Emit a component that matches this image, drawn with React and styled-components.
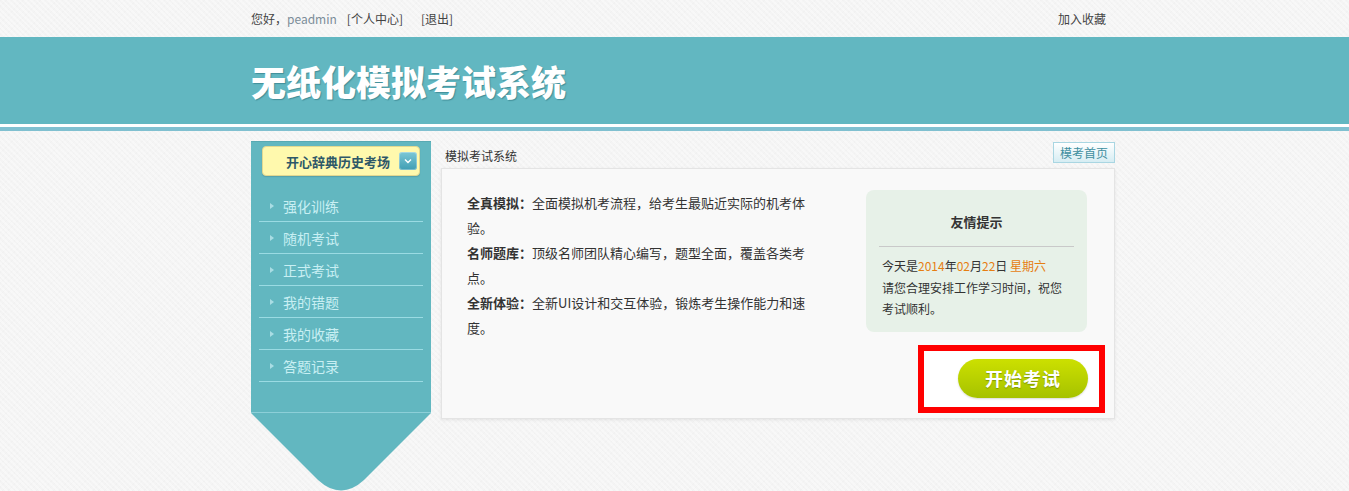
import styled, { createGlobalStyle } from "styled-components";

const GlobalStyle = createGlobalStyle`
  html, body { margin: 0; padding: 0; }
  body {
    font-family: "Noto Sans CJK SC", "Liberation Sans", sans-serif;
    font-size: 12px;
    color: #333;
    background-color: #f4f4f4;
    background-image:
      repeating-linear-gradient(45deg, rgba(255,255,255,.35) 0 2px, transparent 2px 4px),
      repeating-linear-gradient(-45deg, rgba(235,235,235,.3) 0 1px, transparent 1px 4px);
  }
`;

const Wrap = styled.div`
  width: 864px;
  margin-left: calc(50% - 423.5px);
`;

const TopBar = styled.div`
  height: 37px;
  display: flex;
  align-items: center;
  justify-content: space-between;
  padding-right: 9px;
  color: #444;
  font-size: 12px;
  white-space: nowrap;
`;
const TopLeft = styled.div`
  display: flex;
  align-items: center;
  gap: 10px;
`;
const UserName = styled.span`
  color: #7b8d99;
`;
const TopLink = styled.span`
  margin-left: ${(p) => (p.$wide ? "8px" : "0")};
`;

const HeaderBand = styled.div`
  height: 87px;
  background: #62b7c1;
  border-bottom: 3px solid #fff;
  box-shadow: 0 4px 0 #80c0d0;
  margin-bottom: 14px;
`;
const Title = styled.h1`
  margin: 0;
  font-size: 35px;
  font-weight: 900;
  line-height: 87px;
  color: #fff;
  text-shadow: 1px 1px 1px rgba(40, 110, 120, .55);
`;

const Body = styled.div`
  display: flex;
  gap: 10px;
  align-items: flex-start;
`;

const Side = styled.div`
  width: 180px;
  flex: none;
`;
const SideTop = styled.div`
  background: #62b7c0;
  border-top: 1px solid #58a9b2;
  padding: 4px 8px 30px;
  border-bottom: 1px solid #8ccfd8;
`;
const Picker = styled.div`
  margin: 0 3px 14px;
  height: 30px;
  box-sizing: border-box;
  border: 1px solid #e2d890;
  border-radius: 4px;
  background: #fff9ad;
  display: flex;
  align-items: center;
  padding: 0 2px 0 23px;
  box-shadow: 0 1px 1px rgba(0,0,0,.12);
`;
const PickerText = styled.span`
  flex: 1;
  font-size: 13px;
  font-weight: 700;
  color: #2e5868;
`;
const PickerBtn = styled.span`
  width: 18px;
  height: 18px;
  border-radius: 3px;
  background: linear-gradient(#7cc8d6, #3f9db3);
  display: flex;
  align-items: center;
  justify-content: center;
  box-shadow: inset 0 0 0 1px rgba(255,255,255,.3);
`;
const Menu = styled.ul`
  list-style: none;
  margin: 0;
  padding: 0;
`;
const MenuItem = styled.li`
  height: 31px;
  border-bottom: 1px solid #9adbe3;
  display: flex;
  align-items: center;
  padding-left: 11px;
  gap: 9px;
  font-size: 14px;
  color: #c8eff3;
`;
const Arrow = styled.span`
  width: 0;
  height: 0;
  border-top: 3px solid transparent;
  border-bottom: 3px solid transparent;
  border-left: 4px solid #a9dde4;
`;
const Tip = styled.svg`
  display: block;
`;

const Main = styled.div`
  flex: 1;
`;
const Crumbs = styled.div`
  height: 27px;
  display: flex;
  justify-content: space-between;
  align-items: flex-start;
`;
const CrumbText = styled.span`
  margin: 5px 0 0 4px;
  line-height: 20px;
  font-size: 12px;
  color: #333;
`;
const HomeBtn = styled.button`
  margin-top: 1px;
  height: 21px;
  width: 62px;
  padding: 0;
  border: 1px solid #a9d6e2;
  background: linear-gradient(#ffffff, #d6edf3);
  color: #3f8fa0;
  font-family: inherit;
  font-size: 12px;
`;

const Panel = styled.div`
  border: 1px solid #e4e4e4;
  background: #f9f9f9;
  box-shadow: 0 1px 3px rgba(0,0,0,.08);
  padding: 21px 9px 5px 25px;
  display: flex;
  justify-content: space-between;
  align-items: flex-start;
`;
const Intro = styled.div`
  width: 342px;
  font-size: 13px;
  line-height: 25px;
  color: #333;
`;
const Para = styled.p`
  margin: 0;
`;
const Label = styled.strong`
  font-weight: 700;
`;
const RightCol = styled.div`
  display: flex;
  flex-direction: column;
  align-items: flex-end;
`;
const TipBox = styled.div`
  width: 221px;
  box-sizing: border-box;
  margin-right: 18px;
  background: #e7f1e8;
  border-radius: 8px;
  padding: 22px 13px 12px;
`;
const TipTitle = styled.div`
  text-align: center;
  font-size: 13px;
  font-weight: 700;
  line-height: 20px;
  padding-bottom: 14px;
  border-bottom: 1px solid #c9c9c9;
  color: #333;
`;
const TipText = styled.div`
  padding: 8px 3px 0;
  font-size: 12px;
  line-height: 21.5px;
  color: #333;
`;
const Hl = styled.span`
  color: #e67e12;
`;
const Mark = styled.div`
  margin-top: 13px;
  border: 6px solid #ff0000;
  background: #fff;
  padding: 8px 11px 9px 34px;
`;
const StartBtn = styled.button`
  width: 130px;
  height: 39px;
  border: none;
  border-radius: 20px;
  background: linear-gradient(#cce000, #a6c200);
  box-shadow: 0 1px 2px rgba(0,0,0,.15);
  color: #fff;
  font-family: inherit;
  font-size: 18px;
  font-weight: 700;
  letter-spacing: 1px;
  text-shadow: 0 1px 1px rgba(80,100,0,.5);
  padding: 0;
`;

const menu = ["强化训练", "随机考试", "正式考试", "我的错题", "我的收藏", "答题记录"];

export default function App() {
  return (
    <>
      <GlobalStyle />
      <Wrap>
        <TopBar>
          <TopLeft>
            <span>您好，<UserName>peadmin</UserName></span>
            <TopLink>[个人中心]</TopLink>
            <TopLink $wide>[退出]</TopLink>
          </TopLeft>
          <span>加入收藏</span>
        </TopBar>
      </Wrap>
      <HeaderBand>
        <Wrap>
          <Title>无纸化模拟考试系统</Title>
        </Wrap>
      </HeaderBand>
      <Wrap>
        <Body>
          <Side>
            <SideTop>
              <Picker>
                <PickerText>开心辞典历史考场</PickerText>
                <PickerBtn>
                  <svg width="8" height="6" viewBox="0 0 8 6">
                    <path d="M1 1.5 L4 4.5 L7 1.5" fill="none" stroke="#fff" strokeWidth="1.4" />
                  </svg>
                </PickerBtn>
              </Picker>
              <Menu>
                {menu.map((m) => (
                  <MenuItem key={m}>
                    <Arrow />
                    {m}
                  </MenuItem>
                ))}
              </Menu>
            </SideTop>
            <Tip width="180" height="78" viewBox="0 0 180 78">
              <path d="M0 0 H180 L113 67 Q90 88 67 67 Z" fill="#62b7c0" />
            </Tip>
          </Side>
          <Main>
            <Crumbs>
              <CrumbText>模拟考试系统</CrumbText>
              <HomeBtn>模考首页</HomeBtn>
            </Crumbs>
            <Panel>
              <Intro>
                <Para><Label>全真模拟：</Label>全面模拟机考流程，给考生最贴近实际的机考体验。</Para>
                <Para><Label>名师题库：</Label>顶级名师团队精心编写，题型全面，覆盖各类考点。</Para>
                <Para><Label>全新体验：</Label>全新UI设计和交互体验，锻炼考生操作能力和速度。</Para>
              </Intro>
              <RightCol>
                <TipBox>
                  <TipTitle>友情提示</TipTitle>
                  <TipText>
                    今天是<Hl>2014</Hl>年<Hl>02</Hl>月<Hl>22</Hl>日 <Hl>星期六</Hl>
                    <br />
                    请您合理安排工作学习时间，祝您考试顺利。
                  </TipText>
                </TipBox>
                <Mark>
                  <StartBtn>开始考试</StartBtn>
                </Mark>
              </RightCol>
            </Panel>
          </Main>
        </Body>
      </Wrap>
    </>
  );
}
